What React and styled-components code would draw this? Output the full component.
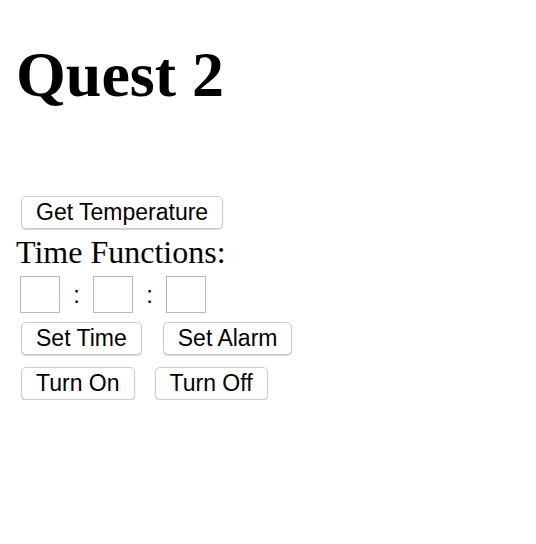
import React from "react";
import styled, { createGlobalStyle } from "styled-components";

const GlobalStyle = createGlobalStyle`
  body {
    margin: 0;
    background: #ffffff;
    font-family: "Liberation Serif", "Times New Roman", serif;
    color: #000000;
  }
`;

export default function App() {
  return (
    <>
      <GlobalStyle />
      <Page>
        <Title>Quest 2</Title>
        <Row $top={84}>
          <Button>Get Temperature</Button>
        </Row>
        <Label>Time Functions:</Label>
        <TimeRow>
          <TimeBox type="text" />
          <Colon>:</Colon>
          <TimeBox type="text" />
          <Colon>:</Colon>
          <TimeBox type="text" />
        </TimeRow>
        <Row $top={9} $gap={21}>
          <Button>Set Time</Button>
          <Button>Set Alarm</Button>
        </Row>
        <Row $top={12} $gap={20}>
          <Button>Turn On</Button>
          <Button>Turn Off</Button>
        </Row>
      </Page>
    </>
  );
}

const Page = styled.div`
  display: flex;
  flex-direction: column;
  align-items: flex-start;
  padding: 0 16px;
`;

const Title = styled.h1`
  margin: 38px 0 0;
  font-family: "Liberation Serif", "Times New Roman", serif;
  font-size: 64px;
  font-weight: bold;
  line-height: 74px;
`;

const Row = styled.div`
  display: flex;
  gap: ${(p) => p.$gap || 0}px;
  margin-top: ${(p) => p.$top || 0}px;
  padding-left: 5px;
`;

const Button = styled.button`
  height: 33px;
  padding: 0 14px;
  border: 1px solid #cbcbcb;
  border-radius: 5px;
  background: #ffffff;
  box-shadow: 0 1px 1px rgba(0, 0, 0, 0.18);
  font-family: "Liberation Sans", Arial, sans-serif;
  font-size: 23px;
  color: #000000;
  cursor: pointer;
`;

const Label = styled.div`
  margin-top: 5px;
  font-size: 32px;
  line-height: 37px;
`;

const TimeRow = styled.div`
  display: flex;
  align-items: center;
  margin-top: 5px;
  padding-left: 4px;
`;

const TimeBox = styled.input`
  box-sizing: border-box;
  width: 40px;
  height: 37px;
  margin: 0;
  border: 1px solid #b8b8b8;
  background: #ffffff;
`;

const Colon = styled.span`
  width: 33px;
  text-align: center;
  font-family: "Liberation Sans", Arial, sans-serif;
  font-size: 24px;
  font-weight: normal;
`;
